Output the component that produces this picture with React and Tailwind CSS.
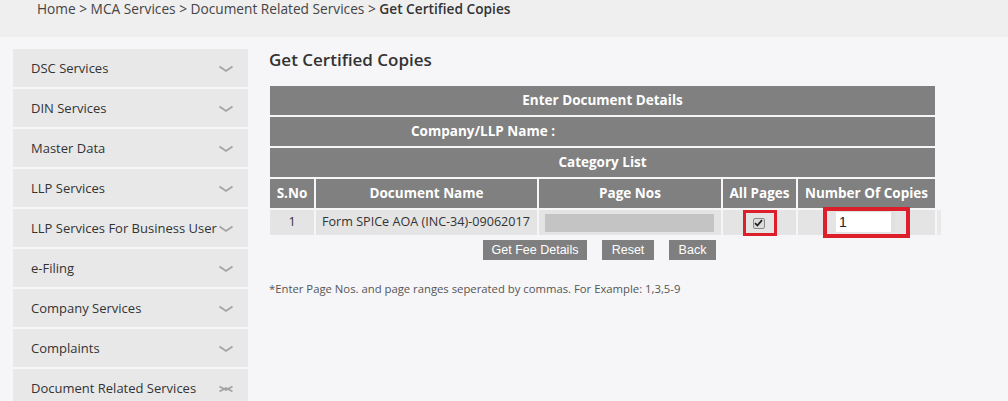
import React from 'react';

const menu = [
    'DSC Services',
    'DIN Services',
    'Master Data',
    'LLP Services',
    'LLP Services For Business User',
    'e-Filing',
    'Company Services',
    'Complaints',
    'Document Related Services',
];

const Chevron = ({ open }) => (
    <svg width="16" height="8" viewBox="0 0 16 8" className="flex-shrink-0">
        {open ? (
            <g fill="none" stroke="#a3a3a3" strokeWidth="1.6">
                <path d="M1.5 1.5 L8 5 L14.5 1.5" />
                <path d="M1.5 6.5 L8 3 L14.5 6.5" />
            </g>
        ) : (
            <path d="M1.5 1.5 L8 6 L14.5 1.5" fill="none" stroke="#a3a3a3" strokeWidth="1.8" />
        )}
    </svg>
);

const Sidebar = () => (
    <aside className="ml-[13px] w-[235px] flex flex-col gap-[2px] flex-shrink-0">
        {menu.map((item, i) => (
            <div
                key={item}
                className="h-[38px] bg-[#e8e8e8] pl-[18px] pr-[14px] pt-[2px] flex items-center justify-between text-[13px] text-[#333]"
            >
                <span className="whitespace-nowrap">{item}</span>
                <Chevron open={i === menu.length - 1} />
            </div>
        ))}
    </aside>
);

const HeadCell = ({ w, children }) => (
    <div className={`${w} h-full bg-[#808080] flex items-center justify-center`}>{children}</div>
);

const DocumentTable = () => (
    <div className="ml-[1px] mt-[15px] flex flex-col gap-[2px] text-white font-bold text-[13.5px]">
        <div className="w-[665px] h-[29px] bg-[#808080] flex items-center justify-center">
            Enter Document Details
        </div>
        <div className="w-[665px] h-[29px] bg-[#808080] flex items-center pl-[141px]">
            Company/LLP Name :
        </div>
        <div className="w-[665px] h-[29px] bg-[#808080] flex items-center justify-center">
            Category List
        </div>
        <div className="h-[29px] flex gap-[2px]">
            <HeadCell w="w-[44px]">S.No</HeadCell>
            <HeadCell w="w-[221px]">Document Name</HeadCell>
            <HeadCell w="w-[182px]">Page Nos</HeadCell>
            <HeadCell w="w-[73px]">All Pages</HeadCell>
            <HeadCell w="w-[137px]">Number Of Copies</HeadCell>
        </div>
        <div className="h-[25px] flex gap-[2px] font-normal text-[12.6px] text-[#333]">
            <div className="w-[44px] bg-[#e4e4e4] flex items-center justify-center">1</div>
            <div className="w-[221px] bg-[#e4e4e4] flex items-center pl-[6px] whitespace-nowrap">
                Form SPICe AOA (INC-34)-09062017
            </div>
            <div className="w-[182px] bg-[#e4e4e4] flex items-center pl-[6px]">
                <div className="w-[169px] h-[18px] bg-[#c4c4c4]" />
            </div>
            <div className="w-[73px] bg-[#e4e4e4] relative">
                <div className="absolute left-[20px] top-0 w-[34px] h-[26px] border-[3px] border-[#dd1f2b] flex items-center justify-center pr-[3px]">
                    <div className="w-[12px] h-[11px] bg-[#dcdcdc] border border-[#8a8a8a] rounded-[2px] flex items-center justify-center">
                        <svg width="9" height="8" viewBox="0 0 9 8">
                            <path d="M1 4.2 L3.4 6.5 L8 1.2" fill="none" stroke="#222" strokeWidth="1.8" />
                        </svg>
                    </div>
                </div>
            </div>
            <div className="w-[137px] bg-[#e4e4e4] relative">
                <div className="absolute left-[25px] top-[-3px] w-[87px] h-[31px] border-[4px] border-[#dd1f2b]" />
                <div className="absolute left-[38px] top-[2px] w-[59px] h-[20px] bg-white border-r-[4px] border-[#e0e0e0] flex items-center pl-[3px] font-['Liberation_Sans',sans-serif] text-[14px] text-[#222]">
                    1
                </div>
            </div>
            <div className="w-[4px] bg-[#e9e9e9]" />
        </div>
    </div>
);

const Buttons = () => (
    <div className="ml-[1px] w-[665px] mt-[5px] flex justify-center gap-[15px] pr-[6px] font-['Liberation_Sans',sans-serif] text-[12.5px] text-white">
        <button type="button" className="w-[104px] h-[20px] bg-[#7f7f7f]">Get Fee Details</button>
        <button type="button" className="w-[52px] h-[20px] bg-[#7f7f7f]">Reset</button>
        <button type="button" className="w-[47px] h-[20px] bg-[#7f7f7f]">Back</button>
    </div>
);

export default function App() {
    return (
        <div className="w-[1008px] h-[401px] overflow-hidden bg-[#f6f6f8] font-['Open_Sans',sans-serif]">
            <div className="h-[37px] bg-[#efefef] pl-[37px] pt-[1px] text-[13.7px] leading-[15px] text-[#444] whitespace-nowrap">
                Home &gt; MCA Services &gt; Document Related Services &gt;{' '}
                <span className="font-semibold text-[#333]">Get Certified Copies</span>
            </div>
            <div className="flex pt-[12px]">
                <Sidebar />
                <main className="ml-[21px] flex flex-col">
                    <h1 className="text-[17px] leading-[22px] font-semibold text-[#333]">Get Certified Copies</h1>
                    <DocumentTable />
                    <Buttons />
                    <p className="mt-[21px] text-[11.3px] text-[#555]">
                        *Enter Page Nos. and page ranges seperated by commas. For Example: 1,3,5-9
                    </p>
                </main>
            </div>
        </div>
    );
}
